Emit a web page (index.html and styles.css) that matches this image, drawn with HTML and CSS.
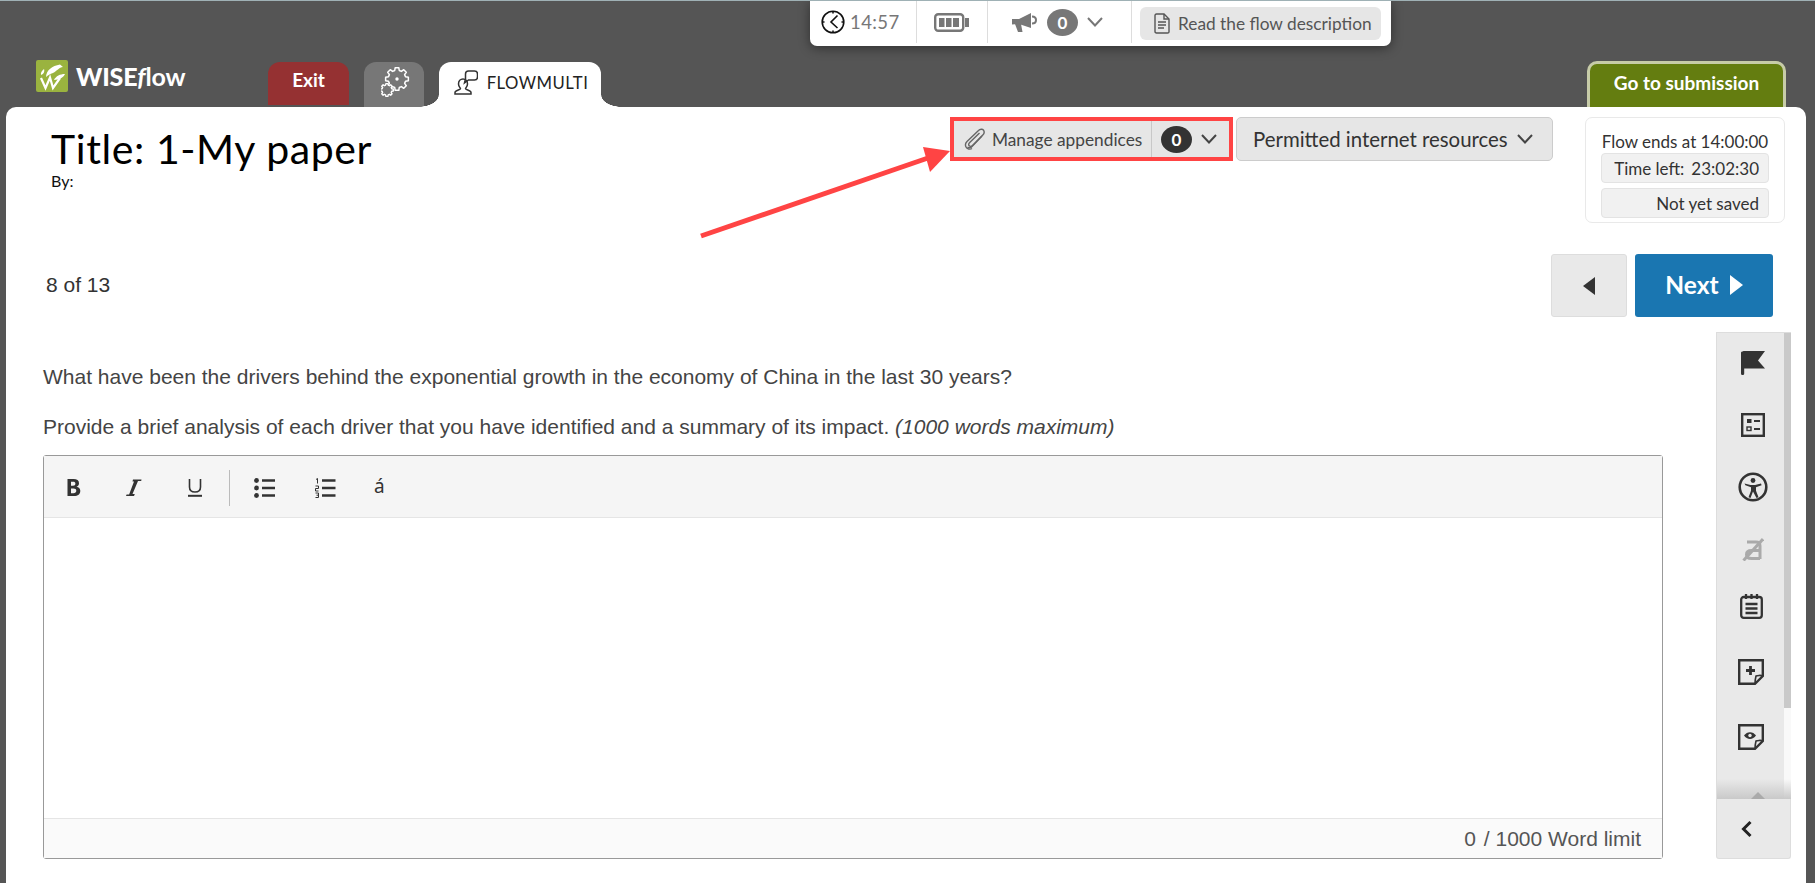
FILE: index.html
```html
<!DOCTYPE html>
<html lang="en">
<head>
<meta charset="utf-8">
<title>WISEflow</title>
<link rel="stylesheet" href="styles.css">
</head>
<body>
<header class="head">
  <a class="logo">
    <svg class="logo-mark" viewBox="0 0 32 32"><rect width="32" height="32" rx="2" fill="#9ab33f"/><path d="M5 18l4.500 10L14 17.500 17 28l7-10" fill="none" stroke="#fff" stroke-width="2.200"/><path d="M10 17C10.500 10 16 6 24 4.500l3 2.500c-4 .5-6 4-10 6-3 1-5 2-7 4z" fill="#fff"/><path d="M18 20c2-4 6-6 11-6-1 3-6 6-11 6zM5 15c-.5-2 .5-4 3-6 .8 2 0 5-3 6z" fill="#fff"/></svg>
    <span class="logo-text">WISE<i>f</i><span class="logo-flow">low</span></span>
  </a>
  <div class="tabs">
    <a class="tab tab-exit">Exit</a>
    <a class="tab tab-gear">
      <svg viewBox="0 0 30 32" width="30" height="32"><polygon class="gear-big" points="24.500,10.720 27.360,11.200 27.360,14.800 24.500,15.280 23.620,17.400 25.300,19.760 22.760,22.300 20.400,20.620 18.280,21.500 17.800,24.360 14.200,24.360 13.720,21.500 11.600,20.620 9.240,22.300 6.700,19.760 8.380,17.400 7.500,15.280 4.640,14.800 4.640,11.200 7.500,10.720 8.380,8.600 6.700,6.240 9.240,3.700 11.600,5.380 13.720,4.500 14.200,1.640 17.800,1.640 18.280,4.500 20.400,5.380 22.760,3.700 25.300,6.240 23.620,8.600"/><circle cx="16" cy="13" r="1.700" fill="#fff"/><polygon class="gear-small" points="10.700,22.700 12.300,23 12.300,25 10.700,25.300 10.200,26.500 11.100,27.800 9.700,29.200 8.400,28.300 7.200,28.800 6.900,30.400 4.900,30.400 4.600,28.800 3.400,28.300 2.100,29.200 .7,27.800 1.600,26.500 1.100,25.300 -.5,25 -.5,23 1.100,22.700 1.600,21.500 .7,20.200 2.100,18.800 3.400,19.700 4.600,19.200 4.900,17.600 6.900,17.600 7.200,19.200 8.400,19.700 9.700,18.800 11.100,20.200 10.200,21.500"/></svg>
    </a>
    <a class="tab tab-active">
      <svg viewBox="0 0 24 25" width="24" height="25" fill="none" stroke="#333" stroke-width="1.500"><path d="M14.500 1h6q3 0 3 3v3q0 3-3 3h-6L10.500 13l1-4V4q0-3 3-3z"/><path d="M6.500 18.500C6 17.500 4.500 16.500 4.500 14c0-3 2-5 4.500-5s4.500 2 4.500 5c0 2.500-1.500 3.500-2 4.500 0 1.500 5.500 1.500 5.500 4V24H1v-1.500c0-2.500 5.500-2.500 5.500-4z"/></svg>
      <span>FLOWMULTI</span>
    </a>
  </div>
  <a class="submit">Go to submission</a>
</header>

<div class="topbar">
  <div class="tb-cell tb-clock">
    <svg viewBox="0 0 24 24" width="24" height="24" fill="none" stroke="#111" stroke-width="1.600"><circle cx="12" cy="12" r="10.800"/><path d="M16.500 5.500L10 12l6.500 6M12 1v2.500M12 20.500V23M1 12h2.500M20.500 12H23"/></svg>
    <span>14:57</span>
  </div>
  <div class="tb-cell tb-battery">
    <svg viewBox="0 0 35 19" width="35" height="19"><rect x="1.200" y="1.200" width="28" height="16.600" rx="3" fill="none" stroke="#777" stroke-width="2.400"/><path d="M31 5h4v9h-4z" fill="#777"/><path d="M5 5h5.500v9H5zM12 5h5.500v9H12zM19 5h6v9h-6z" fill="#777"/></svg>
  </div>
  <div class="tb-cell tb-news">
    <svg viewBox="0 0 26 21" width="26" height="21"><path d="M0 7h7L19 1v15L7 12l-7 .5z" fill="#777"/><path d="M3 12h6l1.500 8H6z" fill="#777"/><path d="M20 4.500c2.500 0 4 1.500 4 3.500s-1.500 3.500-4 3.500" fill="none" stroke="#777" stroke-width="2"/></svg>
    <span class="count count-grey">0</span>
    <svg class="chev" viewBox="0 0 16 10" width="16" height="10"><path d="M1 1l7 7.500L15 1"/></svg>
  </div>
  <a class="tb-read">
    <svg viewBox="0 0 16 21" width="16" height="21" fill="none" stroke="#555" stroke-width="1.400"><path d="M1 2.500Q1 1 2.500 1H10l5 5v13Q15 20 13.500 20h-11Q1 20 1 18.500z"/><path d="M10 1v5h5M4 9h8M4 12h8M4 15h6"/></svg>
    <span>Read the flow description</span>
  </a>
</div>

<main class="panel">
  <section class="panel-top">
    <div class="title-block">
      <h1>Title: 1-My paper</h1>
      <p class="by">By:</p>
    </div>
    <div class="mark-box">
      <a class="manage">
        <span class="manage-main">
          <svg viewBox="0 0 22 22" width="22" height="22" fill="none" stroke="#666" stroke-width="1.400"><path d="M8 20.500c-2 1.300-5 .5-6-1.500s-.5-4 1-5.500L14.500 2.500c1.500-1.500 4-1.800 5-.3s.8 3.300-.7 4.800L8.500 17.500c-1 1-2.500 1.200-3.300.3s-.5-2.200.5-3.200L15.500 5"/><path d="M18 8L8 18.500c-1 1.200-3 1.500-4.500.5"/></svg>
          <span>Manage appendices</span>
        </span>
        <span class="manage-count">
          <span class="count count-dark">0</span>
          <svg class="chev" viewBox="0 0 16 10" width="16" height="10"><path d="M1 1l7 7.500L15 1"/></svg>
        </span>
      </a>
    </div>
    <a class="permitted">
      <span>Permitted internet resources</span>
      <svg class="chev" viewBox="0 0 16 10" width="16" height="10"><path d="M1 1l7 7.500L15 1"/></svg>
    </a>
    <aside class="status">
      <div class="status-line">Flow ends at 14:00:00</div>
      <div class="status-pill"><span>Time left:</span><span>23:02:30</span></div>
      <div class="status-pill">Not yet saved</div>
    </aside>
  </section>

  <section class="nav-row">
    <span class="pager">8 of 13</span>
    <div class="nav-btns">
      <a class="btn-prev"><svg viewBox="0 0 12 18" width="12" height="18"><path d="M12 0v18L0 9z" fill="#333"/></svg></a>
      <a class="btn-next"><span>Next</span><svg viewBox="0 0 13 20" width="13" height="20"><path d="M0 0v20l13-10z" fill="#fff"/></svg></a>
    </div>
  </section>

  <section class="work">
    <div class="question">
      <p class="q1">What have been the drivers behind the exponential growth in the economy of China in the last 30 years?</p>
      <p class="q2">Provide a brief analysis of each driver that you have identified and a summary of its impact. <em>(1000 words maximum)</em></p>
      <div class="editor">
        <div class="toolbar">
          <span class="tool t-b"><svg viewBox="0 0 15 19" width="15" height="19"><path d="M1.500 1h6c3.500 0 5.500 1.300 5.500 4.200 0 1.800-1 3-2.500 3.500 2.200.4 3.800 1.700 3.800 4 0 3.300-2.300 5.300-6.300 5.300H1.500zM5 3.800v3.900h2c1.600 0 2.400-.7 2.400-2s-.8-1.900-2.400-1.900zM5 10.400v4.800h2.500c1.700 0 2.800-.7 2.800-2.400s-1.100-2.400-2.800-2.400z" fill="#333" fill-rule="evenodd"/></svg></span>
          <span class="tool t-i"><svg viewBox="0 0 16 19" width="16" height="19"><path d="M7 1.500h8.500l-.3 1.500H12L6.500 16h2.300L8 18H0l.6-1.500h2.500L8 3.500H6.500z" fill="#333"/></svg></span>
          <span class="tool t-u"><svg viewBox="0 0 14 19" width="14" height="19" fill="none" stroke="#333" stroke-width="1.600"><path d="M1.500 1v8c0 3.500 2 5 5.500 5s5.500-1.500 5.500-5V1"/><path d="M0 17.800h14" stroke-width="2"/></svg></span>
          <span class="tool-sep"></span>
          <span class="tool t-ul"><svg viewBox="0 0 21 20" width="21" height="20" fill="#333"><circle cx="2.500" cy="2.500" r="2.400"/><circle cx="2.500" cy="10" r="2.400"/><circle cx="2.500" cy="17.500" r="2.400"/><path d="M8 1.300h13v2.400H8zM8 8.800h13v2.400H8zM8 16.300h13v2.400H8z"/></svg></span>
          <span class="tool t-ol"><svg viewBox="0 0 21 20" width="21" height="20" fill="none" stroke="#333" stroke-width="1"><path d="M1 1.500l1.500-1v5M.500 8h3v2.500h-3V13h3M.500 15h3v4.500h-3M1.500 17.200h2"/><path d="M7 2.500h13.500M7 10h13.500M7 17.500h13.500" stroke-width="2.400"/></svg></span>
          <span class="tool-char">á</span>
        </div>
        <div class="editor-body"></div>
        <div class="editor-foot"><span>0</span><span>/ 1000 Word limit</span></div>
      </div>
    </div>
    <nav class="rail">
      <div class="rail-scroll">
        <div class="rail-icons">
          <svg viewBox="0 0 24 24" width="24" height="24"><path d="M0 1.500C0 .500 3 0 3 0h21l-7 9.500 7 8H3.200v5c0 2-3.200 2-3.200 0z" fill="#333"/></svg>
          <svg viewBox="0 0 24 24" width="24" height="24" fill="none" stroke="#333"><rect x="1.200" y="1.200" width="21.600" height="21.600" stroke-width="2.400"/><path d="M6 6h4.500v4H6z" fill="#333" stroke="none"/><rect x="6" y="14" width="4" height="3.500" stroke-width="1.400"/><path d="M13 8h6M13 16h6" stroke-width="2"/></svg>
          <svg viewBox="0 0 30 30" width="30" height="30"><circle cx="15" cy="15" r="13.300" fill="none" stroke="#333" stroke-width="2.600"/><circle cx="15" cy="8.500" r="2.400" fill="#333"/><path d="M6.500 11.500l6 1.500h4.500l6-1.500.6 1.800-5.600 2v3.500l2.500 6.500-2 .7L15 19.500l-2.500 6.500-2-.7 2.500-6.500v-3.500l-5.600-2z" fill="#333"/></svg>
          <svg viewBox="0 0 22 23" width="22" height="23" fill="none" stroke="#aaa" stroke-width="3"><path d="M5 4h9q4 0 4 4v13"/><path d="M18 12.500H9.500q-5 0-5 4t5 4H18"/><path d="M1.500 22.500L21 1"/></svg>
          <svg viewBox="0 0 23 25" width="23" height="25" fill="none" stroke="#333" stroke-width="2.300"><rect x="1.200" y="3" width="20.600" height="20.800" rx="2.500"/><path d="M6 0v5M11.500 0v5M17 0v5M5.500 10h12M5.500 14.500h12M5.500 19h12"/></svg>
          <svg viewBox="0 0 26 26" width="26" height="26" fill="none" stroke="#333" stroke-width="2.400"><path d="M1.200 1.200h23.600v15.800l-7.800 7.800H1.200z"/><path d="M25 17c-2-1-6-.5-7 0-.5 2-1 5-1 8" stroke-width="1.600"/><path d="M8 11.500h9M12.500 7v9" stroke-width="2.800"/></svg>
          <svg viewBox="0 0 26 26" width="26" height="26" fill="none" stroke="#333" stroke-width="2.400"><path d="M1.200 1.200h23.600v15.800l-7.800 7.800H1.200z"/><path d="M25 17c-2-1-6-.5-7 0-.5 2-1 5-1 8" stroke-width="1.600"/><path d="M6 11.500c3-4.500 9-4.500 12 0-3 4.500-9 4.500-12 0z" fill="#333" stroke="none"/><circle cx="12" cy="11.500" r="1.700" fill="#e9e9e9" stroke="none"/></svg>
        </div>
        <div class="rail-bar"><span class="rail-thumb"></span></div>
        <div class="rail-fade"><svg viewBox="0 0 14 7" width="14" height="7"><path d="M7 0l7 7H0z" fill="#aaa"/></svg></div>
      </div>
      <a class="rail-toggle"><svg viewBox="0 0 11 18" width="11" height="18" fill="none" stroke="#222" stroke-width="3"><path d="M9.500 2L2.500 9l7 7"/></svg></a>
    </nav>
  </section>
</main>

<svg class="arrow" viewBox="0 0 1815 883" width="1815" height="883"><path d="M701 236L928 158" stroke="#ff4444" stroke-width="5" fill="none"/><path d="M950 151L923 147L930 172z" fill="#ff4444"/></svg>
</body>
</html>
```

FILE: styles.css
```css
* { box-sizing: border-box; }
html, body { margin: 0; height: 883px; }
body {
  background: #555;
  border-top: 1px solid #9fb1b5;
  overflow: hidden;
  display: flex;
  flex-direction: column;
  position: relative;
  font-family: "Lato", "Noto Sans", sans-serif;
  color: #333;
}
a { color: inherit; text-decoration: none; }
svg { display: block; flex: none; }

/* header */
.head {
  height: 106px;
  flex: none;
  display: flex;
  align-items: flex-end;
  padding-left: 36px;
}
.logo { display: flex; align-items: flex-start; gap: 8px; width: 232px; height: 47px; }
.logo-mark { width: 32px; height: 32px; }
.logo-text { color: #fff; font-size: 25px; font-weight: 900; line-height: 32px; letter-spacing: -.2px; }
.logo-text i { font-style: italic; font-weight: 700; }
.logo-flow { font-weight: 700; }
.tabs { display: flex; align-items: flex-end; gap: 15px; }
.tab {
  height: 45px;
  border-radius: 12px 12px 0 0;
  display: flex;
  align-items: center;
  justify-content: center;
}
.tab-exit { width: 81px; height: 43px; margin-bottom: 2px; background: #953132; color: #fff; font-size: 19px; font-weight: 700; padding-bottom: 8px; }
.tab-gear { width: 60px; background: #777; padding-bottom: 5px; padding-left: 4px; }
.gear-big { fill: #777; stroke: #fff; stroke-width: 1.500; stroke-linejoin: round; }
.gear-small { fill: #777; stroke: #fff; stroke-width: 1.400; stroke-linejoin: round; }
.tab-active {
  width: 162px;
  background: #fff;
  gap: 9px;
  font-size: 16.700px;
  letter-spacing: .5px;
  color: #222;
  padding-bottom: 4px;
  padding-left: 2px;
  position: relative;
}
.tab-active::before, .tab-active::after {
  content: "";
  position: absolute;
  bottom: 0;
  width: 21px;
  height: 12px;
}
.tab-active::before { left: -21px; background: radial-gradient(ellipse 21px 12px at 0 0, transparent 97%, #fff 100%); }
.tab-active::after { right: -21px; background: radial-gradient(ellipse 21px 12px at 100% 0, transparent 97%, #fff 100%); }
.submit {
  margin-left: auto;
  margin-right: 29px;
  width: 199px;
  height: 46px;
  background: #647d10;
  border: 3px solid #c7cca8;
  border-bottom: 0;
  border-radius: 10px 10px 0 0;
  color: #fff;
  font-size: 19px;
  font-weight: 700;
  text-align: center;
  line-height: 38px;
}

/* floating status bar */
.topbar {
  position: absolute;
  top: 0;
  left: 810px;
  width: 581px;
  height: 45px;
  background: #fff;
  border-radius: 0 0 7px 7px;
  box-shadow: 0 2px 12px rgba(0,0,0,.45);
  display: flex;
  align-items: center;
}
.tb-cell { height: 42px; margin-bottom: 3px; display: flex; align-items: center; border-right: 1px solid #ddd; }
.tb-clock { width: 107px; padding-left: 11px; gap: 5px; color: #777; font-size: 18.500px; letter-spacing: .4px; }
.tb-battery { width: 71px; padding-left: 17px; }
.tb-news { width: 144px; padding-left: 24px; }
.tb-news .count { margin-left: 9px; }
.tb-news .chev { margin-left: 9px; }
.tb-news .chev path { stroke: #777; }
.tb-read {
  margin-left: 8px;
  width: 241px;
  height: 33px;
  margin-bottom: 1px;
  background: #e6e6e6;
  border-radius: 6px;
  display: flex;
  align-items: center;
  padding-left: 14px;
  gap: 8px;
  color: #555;
  font-size: 17.300px;
}
.count {
  width: 31px;
  height: 27px;
  border-radius: 50%;
  color: #fff;
  font-size: 17px;
  font-weight: 700;
  display: flex;
  align-items: center;
  justify-content: center;
}
.count-grey { background: #777; }
.count-dark { background: #333; }
.chev { fill: none; }
.chev path { stroke: #444; stroke-width: 2; }

/* main panel */
.panel {
  flex: 1;
  margin: 0 9px 0 6px;
  background: #fff;
  border-radius: 10px 10px 0 0;
  display: flex;
  flex-direction: column;
  position: relative;
}
.panel-top {
  display: flex;
  align-items: flex-start;
  padding: 10px 21px 0 45px;
  height: 137px;
}
.title-block { flex: 1; }
h1 { margin: 11px 0 0; font-size: 41px; font-weight: 400; line-height: 42px; color: #000; letter-spacing: .6px; }
.by { margin: 1px 0 0; font-size: 16px; line-height: 20px; color: #111; }
.mark-box { border: 4px solid #ff4444; height: 44px; }
.manage { display: flex; width: 275px; height: 36px; background: #e6e6e6; }
.manage-main { width: 198px; display: flex; align-items: center; gap: 6px; padding-left: 10px; font-size: 17.300px; color: #444; border-right: 1px solid #c8c8c8; }
.manage-count { display: flex; align-items: center; gap: 9px; padding-left: 9px; }
.permitted {
  margin-left: 3px;
  width: 317px;
  height: 44px;
  background: #e6e6e6;
  border: 1px solid #ccc;
  border-radius: 5px;
  display: flex;
  align-items: center;
  gap: 9px;
  padding-left: 16px;
  font-size: 20.400px;
  color: #333;
}
.status {
  margin-left: 32px;
  width: 200px;
  height: 106px;
  border: 1px solid #e9e9e9;
  border-radius: 7px;
  padding: 12px 15px 0;
  font-size: 17px;
  color: #333;
}
.status-line { text-align: center; line-height: 23px; white-space: nowrap; }
.status-pill {
  height: 30px;
  margin-bottom: 5px;
  background: #f1f1f1;
  border: 1px solid #e3e3e3;
  border-radius: 4px;
  display: flex;
  align-items: center;
  justify-content: flex-end;
  gap: 7px;
  padding-right: 9px;
}

.nav-row {
  display: flex;
  justify-content: space-between;
  align-items: center;
  padding: 0 33px 0 40px;
  height: 63px;
  margin-top: 10px;
}
.pager { font: 21px "Liberation Sans", sans-serif; color: #333; padding-bottom: 2px; }
.nav-btns { display: flex; gap: 8px; }
.btn-prev {
  width: 76px;
  height: 63px;
  background: #e9e9e9;
  border: 1px solid #ddd;
  border-radius: 3px;
  display: flex;
  align-items: center;
  justify-content: center;
}
.btn-next {
  width: 138px;
  height: 63px;
  background: #1a76b1;
  border-radius: 3px;
  color: #fff;
  font-size: 24.500px;
  font-weight: 700;
  display: flex;
  align-items: center;
  justify-content: center;
  gap: 11px;
  padding-bottom: 2px;
}

.work { display: flex; margin-top: 15px; padding-left: 37px; height: 527px; }
.question { width: 1620px; display: flex; flex-direction: column; font: 21px/26px "Liberation Sans", sans-serif; color: #444; }
.question p { margin: 0; }
.q1 { padding-top: 32px; }
.q2 { padding-top: 24px; padding-bottom: 15px; }
.editor { flex: 1; display: flex; flex-direction: column; border: 1px solid #999; border-radius: 3px; }
.toolbar { height: 62px; background: #f5f5f5; border-bottom: 1px solid #e5e5e5; display: flex; align-items: center; padding-top: 2px; }
.tool { display: block; }
.t-b { margin-left: 22px; }
.t-i { margin-left: 45px; }
.t-u { margin-left: 46px; }
.tool-sep { width: 1px; height: 36px; background: #bbb; margin: 0 24px 0 27px; }
.t-ol { margin-left: 40px; }
.tool-char { margin-left: 38px; font: 19px/20px "Noto Sans", sans-serif; color: #333; margin-bottom: 4px; }
.editor-body { flex: 1; background: #fff; }
.editor-foot {
  height: 40px;
  background: #fafafa;
  border-top: 1px solid #e5e5e5;
  display: flex;
  justify-content: flex-end;
  align-items: center;
  gap: 8px;
  padding-right: 21px;
  color: #555;
  font-size: 21px;
}

.rail { margin-left: 53px; width: 75px; display: flex; flex-direction: column; }
.rail-scroll { position: relative; flex: 1; overflow: hidden; background: #e9e9e9; border-left: 1px solid #ddd; border-top: 1px solid #ddd; }
.rail-icons { width: 68px; height: 100%; position: relative; }
.rail-icons svg { position: absolute; }
.rail-icons svg:nth-child(1) { top: 18px; left: 24px; }
.rail-icons svg:nth-child(2) { top: 80px; left: 24px; }
.rail-icons svg:nth-child(3) { top: 139px; left: 21px; }
.rail-icons svg:nth-child(4) { top: 205px; left: 25px; }
.rail-icons svg:nth-child(5) { top: 261px; left: 23px; }
.rail-icons svg:nth-child(6) { top: 326px; left: 21px; }
.rail-icons svg:nth-child(7) { top: 391px; left: 21px; }
.rail-bar { position: absolute; top: 0; right: 0; bottom: 0; width: 7px; background: #f9f9f9; }
.rail-thumb { display: block; height: 375px; background: #c9c9c9; }
.rail-fade { position: absolute; left: 0; right: 0; bottom: 0; height: 20px; background: linear-gradient(rgba(200,200,200,0), #c9c9c9); display: flex; justify-content: center; align-items: flex-end; padding-left: 8px; }
.rail-toggle { height: 60px; background: #e9e9e9; border: 1px solid #ddd; border-top: 0; border-radius: 0 0 3px 3px; display: flex; align-items: center; justify-content: center; padding-right: 14px; }

.arrow { position: absolute; top: -1px; left: 0; pointer-events: none; }
```
